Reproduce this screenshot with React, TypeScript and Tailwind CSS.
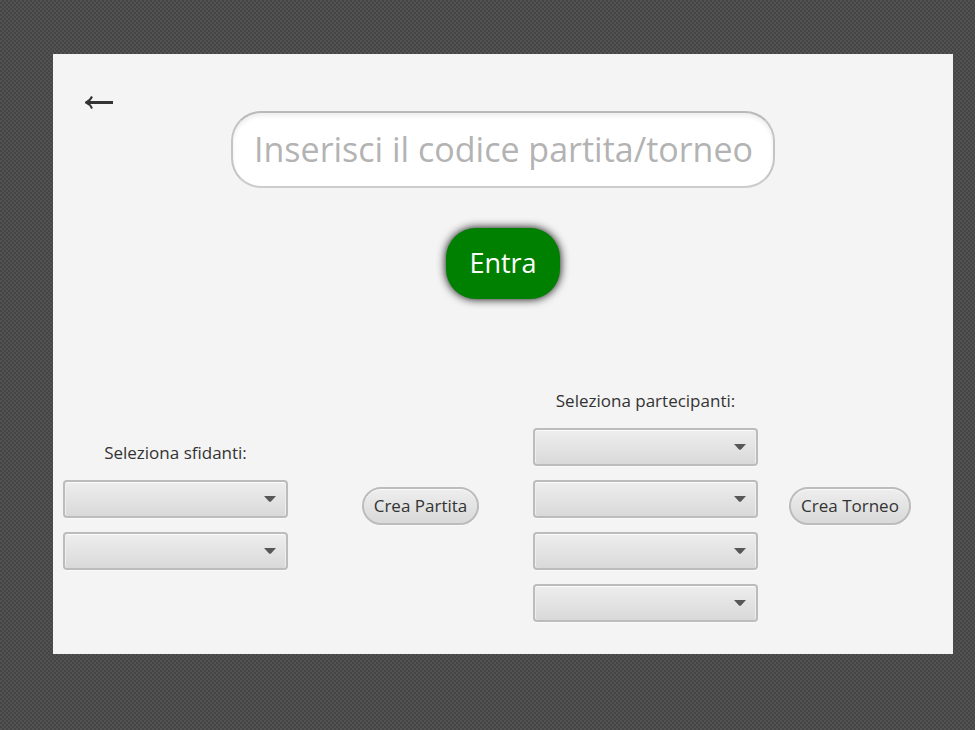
import type { ReactNode } from "react";

function ComboBox({ label }: { label: string }) {
  return (
    <div className="relative w-full rounded-[4px] shadow-[0_1px_0_#fafafa]">
      <select
        aria-label={label}
        className="block h-[38px] w-full appearance-none rounded-[4px] border-2 border-[#bcbcbc] bg-linear-to-b from-[#eeeeee] to-[#d9d9d9] px-3 text-[17px] text-[#333333] shadow-[inset_0_1px_0_#fbfbfb,inset_1px_0_0_#eeeeee,inset_-1px_0_0_#eeeeee]"
      >
        <option value=""></option>
      </select>
      <svg
        viewBox="0 0 12 6"
        className="pointer-events-none absolute top-4 right-3 h-[6px] w-[12px]"
        aria-hidden="true"
      >
        <path d="M0 0H12L7 5.4Q6 6.3 5 5.4Z" fill="#575757" />
      </svg>
    </div>
  );
}

function Group({ title, count }: { title: string; count: number }) {
  return (
    <fieldset className="flex w-[225px] flex-col items-center gap-[14px]">
      <span className="h-6 text-[17px] leading-[22px]">{title}</span>
      {Array.from({ length: count }, (_, i) => (
        <ComboBox key={i} label={`${title} ${i + 1}`} />
      ))}
    </fieldset>
  );
}

function PillButton({ children, className }: { children: ReactNode; className: string }) {
  return (
    <button
      type="button"
      className={`h-[38px] shrink-0 rounded-full border-2 border-[#bcbcbc] bg-linear-to-b from-[#eeeeee] to-[#d9d9d9] text-[17px] leading-[22px] whitespace-nowrap shadow-[inset_0_1px_0_#fbfbfb,0_1px_0_#fafafa] ${className}`}
    >
      {children}
    </button>
  );
}

export default function App() {
  return (
    <div className="min-h-screen bg-[#4b4b4b] bg-[repeating-conic-gradient(#454545_0%_25%,#525252_0%_50%)] bg-size-[4px_4px] pt-[54px] pr-[22px] pb-[76px] pl-[53px] font-['Open_Sans','Noto_Sans',sans-serif] text-[#333333]">
      <main className="bg-[#f4f4f4] pb-8">
        <header className="flex h-[57px] items-end px-8">
          <button type="button" aria-label="Indietro" className="h-4">
            <svg viewBox="0 0 29 14" className="h-[14px] w-[29px]" fill="none" stroke="#333333" aria-hidden="true">
              <path d="M2 6.5H28" strokeWidth="3" />
              <path d="M7 0.5Q5 5 1 6.5Q5 8 7 12.5" strokeWidth="2" />
            </svg>
          </button>
        </header>
        <form className="flex flex-col items-center gap-10">
          <input
            type="text"
            aria-label="Codice partita/torneo"
            placeholder="Inserisci il codice partita/torneo"
            className="h-[77px] w-[544px] rounded-[30px] border-2 border-t-[#b9b9b9] border-r-[#c4c4c4] border-b-[#cccccc] border-l-[#c4c4c4] bg-white pr-2 pb-[2px] pl-[21px] text-[34px] shadow-[inset_0_3px_4px_#eeeeee] placeholder:text-[#b3b3b3]"
          />
          <button
            type="button"
            className="h-[71px] w-[114px] rounded-[30px] bg-[#008000] text-[27px] text-white shadow-[0_0_10px_#000000]"
          >
            Entra
          </button>
        </form>
        <section className="mt-[91px] flex items-center pl-[10px]">
          <Group title="Seleziona sfidanti:" count={2} />
          <PillButton className="mr-[54px] ml-[74px] w-[117px]">Crea Partita</PillButton>
          <Group title="Seleziona partecipanti:" count={4} />
          <PillButton className="ml-[31px] w-[122px]">Crea Torneo</PillButton>
        </section>
      </main>
    </div>
  );
}
